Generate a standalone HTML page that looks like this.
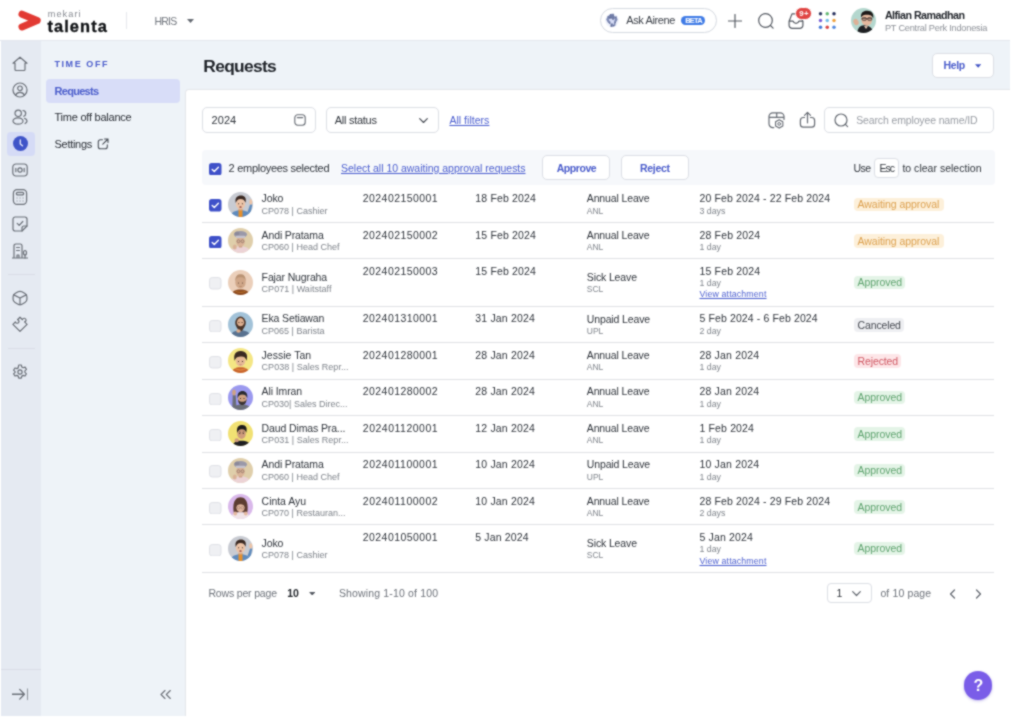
<!DOCTYPE html>
<html><head><meta charset="utf-8"><title>Requests</title>
<style>
*{box-sizing:border-box;margin:0;padding:0}
html,body{width:1024px;height:718px;overflow:hidden;background:#fff;will-change:transform;font-family:"Liberation Sans",sans-serif;color:#2b2f36}
.abs,.t,.av,svg.i{position:absolute}
.t{white-space:nowrap;line-height:14px;font-size:11px}
#rail{left:1px;top:41px;width:40px;height:675px;background:#e5eaf2}
#side{left:41px;top:41px;width:144px;height:675px;background:#eef3f8}
#band{left:185px;top:41px;width:825px;height:50px;background:#eef3f8}
#card{left:185px;top:89px;width:825px;height:627px;background:#fff;border-top-left-radius:4px;border-left:1px solid #e4e6ea;border-top:1px solid #e4e6ea}
#hdrline{left:0;top:40px;width:1010px;height:1px;background:#e3e7ee}
.box{border:1px solid #dcdfe5;border-radius:5px;background:#fff}
.sep{height:1px;background:#dfe1e4;left:202px;width:792px}
a.l{color:#4a5dcf;text-decoration:underline}
body{filter:url(#soft)}
</style></head><body>
<svg width="0" height="0" style="position:absolute"><filter id="soft" x="0" y="0" width="100%" height="100%" color-interpolation-filters="sRGB"><feConvolveMatrix order="3" kernelMatrix="1 2 1 2 8 2 1 2 1" divisor="20" edgeMode="duplicate" preserveAlpha="true"/></filter></svg>

<div class="abs" id="rail"></div><div class="abs" id="side"></div><div class="abs" id="band"></div><div class="abs" id="card"></div><div class="abs" id="hdrline"></div>
<svg class="i" style="left:14px;top:6px" width="32" height="30" viewBox="14 6 32 30"><path d="M22 14.200L37.200 20.550 22 26.900" fill="none" stroke="#e23a33" stroke-width="7" stroke-linecap="round" stroke-linejoin="round"/></svg>
<div class="t" style="left:47.7px;top:8.3px;font-size:9.2px;color:#868a91;line-height:12px;letter-spacing:1.066px;">mekari</div>
<div class="t" style="left:47.4px;top:16.3px;font-size:16.4px;color:#111316;line-height:20px;font-weight:700;letter-spacing:1.107px;-webkit-text-stroke:.35px #111316;">talenta</div>
<div class="abs" style="left:125.500px;top:12px;width:1px;height:17px;background:#e6e8ec"></div>
<div class="t" style="left:154.5px;top:13.5px;font-size:10.5px;color:#70757d;line-height:14px;letter-spacing:-0.772px;">HRIS</div>
<svg class="i" style="left:186.500px;top:18.500px" width="7" height="4" viewBox="0 0 7 4"><path d="M0 0h7L3.500 4z" fill="#666b73"/></svg>
<div class="abs" style="left:600px;top:8px;width:116.500px;height:24.500px;border:1px solid #d6dae1;border-radius:13px;background:#fff"></div>
<svg class="i" style="left:605px;top:13px" width="14" height="15" viewBox="0 0 14 15"><circle cx="7" cy="7.400" r="6.800" fill="#eef1fb"/><path d="M5.500 1L8.300 .8 9.300 3.200 11.500 3.600 12.600 6.800 10.800 9.600 10.200 13 8.200 13.400 6 14 4.800 11 2.800 9.400 1.200 6.600 2.600 3.600z" fill="#7e8ab4"/><path d="M6.300 5.200L8 7l2-1.800L9.300 9 8.600 12 7 10.200 5.600 12.400 5 8.600 3.600 6.400z" fill="#d5dbf5"/><path d="M5.500 1L6.300 5.200M8.300 .8L8 7M11.500 3.600L10 5.200M2.600 3.600L6.300 5.200M10.800 9.600L9.300 9M4.800 11L5 8.600M7 10.200L6 14M8.600 12L8.200 13.400" stroke="#55608a" stroke-width=".7" fill="none"/></svg>
<div class="t" style="left:626.3px;top:13.399999999999999px;font-size:11px;color:#3a3f47;line-height:14px;letter-spacing:-0.388px;">Ask Airene</div>
<div class="abs" style="left:681.400px;top:15.600px;width:23.800px;height:9.800px;border-radius:5px;background:#3f7be6"></div>
<div class="t" style="left:685.2px;top:15.600000000000001px;font-size:7.5px;color:#ffffff;line-height:10px;font-weight:700;letter-spacing:-0.815px;">BETA</div>
<svg class="i" style="left:727.500px;top:13.500px" width="14" height="14" viewBox="0 0 14 14"><path d="M7 .5v13M.5 7h13" stroke="#565b63" stroke-width="1.200" stroke-linecap="round"/></svg>
<svg class="i" style="left:756.500px;top:11.700px" width="18" height="18" viewBox="0 0 18 18"><circle cx="8.500" cy="8.500" r="6.800" fill="none" stroke="#565b63" stroke-width="1.200"/><path d="M13.500 13.500l2.600 2.600" stroke="#565b63" stroke-width="1.200" stroke-linecap="round"/></svg>
<svg class="i" style="left:788.300px;top:12.600px" width="16" height="16" viewBox="0 0 16 16"><path d="M4 .9h4M1.100 8.200L4 .9M14.900 8.200l-1.200-2.600M1.100 8.200v4a3.200 3.200 0 0 0 3.200 3.200h7.400a3.200 3.200 0 0 0 3.200-3.200v-4h-4a3 3 0 0 1-5.800 0z" fill="none" stroke="#565b63" stroke-width="1.200" stroke-linejoin="round" stroke-linecap="round"/></svg>
<div class="abs" style="left:795.200px;top:7.300px;width:17.200px;height:12.800px;border-radius:6.400px;background:#e04644;border:1px solid #fff"></div>
<div class="t" style="left:799.2px;top:8.7px;font-size:7.8px;color:#ffffff;line-height:10px;font-weight:700;letter-spacing:0.353px;">9+</div>
<svg class="i" style="left:815px;top:8px" width="24" height="24" viewBox="0 0 24 24"><circle cx="5.50" cy="5.80" r="1.750" fill="#2f3c63"/><circle cx="12.25" cy="5.80" r="1.750" fill="#62b873"/><circle cx="19.00" cy="5.80" r="1.750" fill="#262f5c"/><circle cx="5.50" cy="12.50" r="1.750" fill="#7a5fd8"/><circle cx="12.25" cy="12.50" r="1.750" fill="#74bfea"/><circle cx="19.00" cy="12.50" r="1.750" fill="#f0a23e"/><circle cx="5.50" cy="19.20" r="1.750" fill="#477ad8"/><circle cx="12.25" cy="19.20" r="1.750" fill="#d84545"/><circle cx="19.00" cy="19.20" r="1.750" fill="#548ade"/></svg>
<div class="av" style="left:851px;top:8.200px;width:25px;height:25px;border-radius:50%;overflow:hidden"><svg width="25" height="25" viewBox="0 0 50 50" style="display:block"><rect width="50" height="50" fill="#b4d7ce"/><path d="M12 52C13 40 18 33.500 28 34.500S44 41 44 52z" fill="#1f2023"/><path d="M26 36l4 6 4-5.500z" fill="#e9c7b3"/><ellipse cx="31.500" cy="23" rx="10.800" ry="12.500" fill="#e3b79d"/><path d="M20 19C19 9 25 5 33 5.500S46 10 44.500 21C42 15 39 13.500 32.500 13.500S23 14.500 20 19z" fill="#1e1a19"/><path d="M21 21.500h21" stroke="#3a2f2c" stroke-width="1.800"/><rect x="22.500" y="19" width="8" height="6" rx="2" fill="none" stroke="#3a2f2c" stroke-width="1.300"/><rect x="33.500" y="19" width="8" height="6" rx="2" fill="none" stroke="#3a2f2c" stroke-width="1.300"/><ellipse cx="10" cy="28" rx="5" ry="6.500" fill="#ddb096" transform="rotate(-25 10 28)"/><path d="M13 24l7-3" stroke="#c9cfd0" stroke-width="1.500"/></svg></div>
<div class="t" style="left:884.9px;top:8.7px;font-size:10.7px;color:#1f2329;line-height:13px;font-weight:700;letter-spacing:-0.519px;">Alfian Ramadhan</div>
<div class="t" style="left:884.9px;top:21.8px;font-size:9.2px;color:#8d9198;line-height:12px;letter-spacing:-0.213px;">PT Central Perk Indonesia</div>
<svg class="i" style="left:12.2px;top:56.0px" width="16" height="16" viewBox="0 0 16 16" fill="none" stroke="#6b7078" stroke-width="1.2" stroke-linecap="round" stroke-linejoin="round"><path d="M8 1.200L1 7.200h2v6.300a1 1 0 0 0 1 1h8a1 1 0 0 0 1-1V7.200h2z"/></svg>
<svg class="i" style="left:12.2px;top:82.3px" width="16" height="16" viewBox="0 0 16 16" fill="none" stroke="#6b7078" stroke-width="1.2" stroke-linecap="round" stroke-linejoin="round"><circle cx="8" cy="8" r="7"/><circle cx="8" cy="6.300" r="2.300"/><path d="M3.600 13.200c.8-2 2.500-2.900 4.400-2.900s3.600.9 4.400 2.900"/></svg>
<svg class="i" style="left:12.2px;top:109.4px" width="16" height="16" viewBox="0 0 16 16" fill="none" stroke="#6b7078" stroke-width="1.2" stroke-linecap="round" stroke-linejoin="round"><circle cx="6.200" cy="4.300" r="3.200"/><ellipse cx="6" cy="12" rx="5" ry="3.200"/><path d="M11 1.500c1.600.2 2.700 1.400 2.700 2.900 0 1.300-.8 2.400-2 2.800M12.600 9.400c1.500.5 2.400 1.400 2.400 2.600 0 1-.7 1.900-1.900 2.500"/></svg>
<div class="abs" style="left:6.500px;top:132.300px;width:28px;height:23.400px;border-radius:4px;background:#d5dbf6"></div>
<svg class="i" style="left:13px;top:136.300px" width="15" height="15" viewBox="0 0 15 15"><circle cx="7.500" cy="7.500" r="7.500" fill="#3f54c8"/><path d="M7.300 4v4l2.200 1.800" fill="none" stroke="#e9ecfb" stroke-width="1.300" stroke-linecap="round" stroke-linejoin="round"/></svg>
<svg class="i" style="left:12.2px;top:162.3px" width="16" height="16" viewBox="0 0 16 16" fill="none" stroke="#6b7078" stroke-width="1.2" stroke-linecap="round" stroke-linejoin="round"><rect x=".8" y="2" width="14.400" height="12" rx="3.200"/><circle cx="8" cy="8" r="2.100"/><path d="M3.800 6.300v3.400M12.200 6.300v3.400"/></svg>
<svg class="i" style="left:12.099999999999998px;top:188.8px" width="16" height="16" viewBox="0 0 16 16" fill="none" stroke="#6b7078" stroke-width="1.2" stroke-linecap="round" stroke-linejoin="round"><rect x="1.400" y=".6" width="13.200" height="14.800" rx="3.600"/><rect x="4.300" y="3.300" width="7.400" height="2.600" rx="1.300"/><path d="M5 9h.1M8 9h.1M11 9h.1M5 12h.1M8 12h.1M11 12h.1" stroke-width="1"/></svg>
<svg class="i" style="left:12.2px;top:215.6px" width="16" height="16" viewBox="0 0 16 16" fill="none" stroke="#6b7078" stroke-width="1.2" stroke-linecap="round" stroke-linejoin="round"><path d="M3.200 1h9.600a2.200 2.200 0 0 1 2.200 2.200V10L10 15H3.200A2.200 2.200 0 0 1 1 12.800V3.200A2.200 2.200 0 0 1 3.200 1z"/><path d="M15 10h-3a2 2 0 0 0-2 2v3"/><path d="M5.200 7.300l2 2 3.600-3.800"/></svg>
<svg class="i" style="left:12.3px;top:242.7px" width="16" height="16" viewBox="0 0 16 16" fill="none" stroke="#6b7078" stroke-width="1.2" stroke-linecap="round" stroke-linejoin="round"><path d="M2 15V2.800A1.800 1.800 0 0 1 3.800 1h4.400A1.800 1.800 0 0 1 10 2.800V15M.3 15h15.400M4.500 4.500h3M4.500 7.500h3M5 15v-3h2v3"/><ellipse cx="13" cy="9.800" rx="1.500" ry="2.300"/><path d="M13 12.100V15"/></svg>
<div class="abs" style="left:7.500px;top:273.500px;width:27.500px;height:1px;background:#d9dde6"></div>
<svg class="i" style="left:12.099999999999998px;top:289.5px" width="16" height="16" viewBox="0 0 16 16" fill="none" stroke="#6b7078" stroke-width="1.2" stroke-linecap="round" stroke-linejoin="round"><path d="M6.06 1.84Q8.00 0.80 9.94 1.84L12.96 3.46Q14.90 4.50 14.90 6.70L14.90 9.30Q14.90 11.50 12.96 12.54L9.94 14.16Q8.00 15.20 6.06 14.16L3.04 12.54Q1.10 11.50 1.10 9.30L1.10 6.70Q1.10 4.50 3.04 3.46z"/><path d="M1.800 4.900L8 8l6.200-3.100M8 8v6.600"/></svg>
<svg class="i" style="left:12.2px;top:315.9px" width="16" height="16" viewBox="0 0 16 16" fill="none" stroke="#6b7078" stroke-width="1.2" stroke-linecap="round" stroke-linejoin="round"><g transform="translate(8 8.300) rotate(45)"><path d="M-5-5H-1.500a1.800 1.800 0 1 1 3 0H5V5H-5V1.500a1.800 1.800 0 1 0 0-3z"/></g></svg>
<div class="abs" style="left:7.500px;top:348.300px;width:27.500px;height:1px;background:#d9dde6"></div>
<svg class="i" style="left:12.2px;top:363.8px" width="16" height="16" viewBox="0 0 16 16" fill="none" stroke="#6b7078" stroke-width="1.2" stroke-linecap="round" stroke-linejoin="round"><circle cx="8" cy="8" r="2.100"/><path d="M6.700 1h2.600l.5 2 1.300.7 2-.6 1.300 2.200-1.500 1.500v1.500l1.500 1.500-1.300 2.200-2-.6-1.300.7-.5 2H6.700l-.5-2-1.300-.7-2 .6-1.300-2.200 1.500-1.500V7.700L1.600 6.200l1.300-2.200 2 .6 1.300-.7z"/></svg>
<div class="abs" style="left:1px;top:669px;width:40px;height:1px;background:#d9dde6"></div>
<svg class="i" style="left:11.95px;top:685.75px" width="16.5" height="16.5" viewBox="0 0 16 16" fill="none" stroke="#6b7078" stroke-width="1.3" stroke-linecap="round" stroke-linejoin="round"><path d="M0 8h11.500M7.500 3.300L12 8l-4.500 4.700M15.500 2.800v10.400"/></svg>
<svg class="i" style="left:159.500px;top:689.500px" width="11" height="9" viewBox="0 0 11 9" fill="none" stroke="#6b7078" stroke-width="1.100" stroke-linecap="round" stroke-linejoin="round"><path d="M5 .5L1 4.500l4 4M10.300 .5l-4 4 4 4"/></svg>
<div class="t" style="left:54.5px;top:57.8px;font-size:9px;color:#4a5ccb;line-height:12px;font-weight:700;letter-spacing:1.563px;">TIME OFF</div>
<div class="abs" style="left:46px;top:78.800px;width:134px;height:24px;border-radius:4px;background:#d8ddf8"></div>
<div class="t" style="left:54.5px;top:83.7px;font-size:11px;color:#4a5ccb;line-height:14px;font-weight:700;letter-spacing:-0.714px;">Requests</div>
<div class="t" style="left:54.5px;top:110.2px;font-size:11px;color:#2b2f36;line-height:14px;letter-spacing:-0.238px;">Time off balance</div>
<div class="t" style="left:54.5px;top:137.0px;font-size:11px;color:#2b2f36;line-height:14px;letter-spacing:-0.281px;">Settings</div>
<svg class="i" style="left:96.500px;top:138.300px" width="12" height="12" viewBox="0 0 12 12" fill="none" stroke="#4b5058" stroke-width="1.100" stroke-linecap="round" stroke-linejoin="round"><path d="M5.500 1.800H3.300A2 2 0 0 0 1.300 3.800v5a2 2 0 0 0 2 2h5a2 2 0 0 0 2-2V6.700M7.500 1h3.500v3.500M11 1L5.800 6.200"/></svg>
<div class="t" style="left:203.3px;top:55.2px;font-size:17.4px;color:#1f2329;line-height:22px;font-weight:700;letter-spacing:-0.69px;">Requests</div>
<div class="abs box" style="left:931.500px;top:52.500px;width:62px;height:25.800px"></div>
<div class="t" style="left:943.5px;top:58.400000000000006px;font-size:10.5px;color:#4a5ccb;line-height:14px;font-weight:700;letter-spacing:-0.363px;">Help</div>
<svg class="i" style="left:975px;top:63.600px" width="6.400" height="4" viewBox="0 0 7 4"><path d="M0 0h7L3.500 4z" fill="#4254c5"/></svg>
<div class="abs box" style="left:202px;top:107px;width:113.500px;height:26px"></div>
<div class="t" style="left:211.6px;top:113.2px;font-size:11px;color:#30353c;line-height:14px;letter-spacing:0.033px;">2024</div>
<svg class="i" style="left:293.500px;top:114px" width="12" height="12" viewBox="0 0 12 12" fill="none" stroke="#666b73" stroke-width="1.100" stroke-linecap="round"><rect x=".8" y=".8" width="10.400" height="10.400" rx="3"/><path d="M3.300 3.600h5.400"/></svg>
<div class="abs box" style="left:325.500px;top:107px;width:113px;height:26px"></div>
<div class="t" style="left:334.7px;top:113.2px;font-size:11px;color:#30353c;line-height:14px;letter-spacing:-0.263px;">All status</div>
<svg class="i" style="left:418.500px;top:117.500px" width="9" height="5.500" viewBox="0 0 9 5.500" fill="none" stroke="#4b5058" stroke-width="1.200" stroke-linecap="round" stroke-linejoin="round"><path d="M.7 .7l3.800 3.800L8.300 .7"/></svg>
<div class="t" style="left:449.4px;top:113.2px;font-size:10.5px;color:#4a5ccb;line-height:14px;letter-spacing:0.03px;"><a class="l">All filters</a></div>
<svg class="i" style="left:767.500px;top:111.500px" width="17" height="17" viewBox="0 0 17 17" fill="none" stroke="#666b73" stroke-width="1.200" stroke-linecap="round" stroke-linejoin="round"><path d="M5.800 15.600H4.800A3.800 3.800 0 0 1 1 11.800V4.600A3.800 3.800 0 0 1 4.800 .8h7.400A3.800 3.800 0 0 1 16 4.600V7.500M1.200 5.300h14.700M8.700 .9v4.300"/><polygon points="14.84,14.00 11.20,16.10 7.56,14.00 7.56,9.80 11.20,7.70 14.84,9.80" stroke-width="1.100"/><circle cx="11.200" cy="11.900" r="1.400" stroke-width="1"/></svg>
<svg class="i" style="left:798.500px;top:111px" width="17" height="17" viewBox="0 0 17 17" fill="none" stroke="#666b73" stroke-width="1.200" stroke-linecap="round" stroke-linejoin="round"><path d="M5.600 6.500H4.300A2.900 2.900 0 0 0 1.400 9.400v3.900A2.900 2.900 0 0 0 4.300 16.200h8.400a2.900 2.900 0 0 0 2.900-2.900V9.400a2.900 2.900 0 0 0-2.900-2.900H11.400M8.500 11.800V1.500M5.500 4.400L8.500 1.400l3 3"/></svg>
<div class="abs box" style="left:824.300px;top:107px;width:170px;height:26px"></div>
<svg class="i" style="left:833.500px;top:113px" width="15" height="15" viewBox="0 0 15 15" fill="none" stroke="#666b73" stroke-width="1.200" stroke-linecap="round"><circle cx="7" cy="7" r="6"/><path d="M11.400 11.400l2.200 2.200"/></svg>
<div class="t" style="left:856.2px;top:113.2px;font-size:10.5px;color:#999da4;line-height:14px;letter-spacing:-0.135px;">Search employee name/ID</div>
<div class="abs" style="left:202px;top:150px;width:792.500px;height:35px;border-radius:4px;background:#f6f8fb"></div>
<div class="abs" style="left:209px;top:161.35px;width:12.500px;height:12.500px"><svg width="12.500" height="12.500" viewBox="0 0 12.500 12.500"><rect width="12.500" height="12.500" rx="2.800" fill="#3f51c9"/><path d="M3.200 6.500l2.100 2.100 4.100-4.300" fill="none" stroke="#fff" stroke-width="1.400" stroke-linecap="round" stroke-linejoin="round"/></svg></div>
<div class="t" style="left:228.6px;top:161.0px;font-size:11px;color:#30353c;line-height:14px;letter-spacing:-0.289px;">2 employees selected</div>
<div class="t" style="left:341px;top:161.0px;font-size:10.5px;color:#4a5ccb;line-height:14px;letter-spacing:-0.013px;"><a class="l">Select all 10 awaiting approval requests</a></div>
<div class="abs box" style="left:542.300px;top:154.600px;width:67.700px;height:25.600px"></div>
<div class="t" style="left:556.7px;top:160.6px;font-size:10.5px;color:#4a5ccb;line-height:14px;font-weight:700;letter-spacing:-0.441px;">Approve</div>
<div class="abs box" style="left:621px;top:154.600px;width:67.500px;height:25.600px"></div>
<div class="t" style="left:640px;top:160.6px;font-size:10.5px;color:#4a5ccb;line-height:14px;font-weight:700;letter-spacing:-0.286px;">Reject</div>
<div class="t" style="left:853.4px;top:161.0px;font-size:10.5px;color:#30353c;line-height:14px;letter-spacing:-0.491px;">Use</div>
<div class="abs box" style="left:874.300px;top:158px;width:24.500px;height:19.500px;border-radius:4px"></div>
<div class="t" style="left:879.5px;top:161.0px;font-size:10.5px;color:#30353c;line-height:14px;letter-spacing:-1.001px;">Esc</div>
<div class="t" style="left:902.4px;top:161.0px;font-size:10.5px;color:#30353c;line-height:14px;letter-spacing:0.017px;">to clear selection</div>
<div class="abs" style="left:209px;top:197.85px;width:12.500px;height:12.500px"><svg width="12.500" height="12.500" viewBox="0 0 12.500 12.500"><rect width="12.500" height="12.500" rx="2.800" fill="#3f51c9"/><path d="M3.200 6.500l2.100 2.100 4.100-4.300" fill="none" stroke="#fff" stroke-width="1.400" stroke-linecap="round" stroke-linejoin="round"/></svg></div>
<div class="av" style="left:228px;top:191.6px;width:25px;height:25px;border-radius:50%;overflow:hidden"><svg width="25" height="25" viewBox="0 0 50 50" style="display:block"><rect width="50" height="50" fill="#c8cbd2"/><path d="M39 40L44.500 24l4 1.500L45 44z" fill="#5f8bbd"/><ellipse cx="45.500" cy="20" rx="3.200" ry="5.500" fill="#ecc3a6"/><path d="M5 52C5 41 13 36.500 25 36.500S45 41 45 52z" fill="#5f8bbd"/><rect x="21" y="35" width="8" height="17" fill="#e58f2c"/><rect x="21.500" y="30" width="7" height="7" fill="#d7a582"/><ellipse cx="25" cy="23.500" rx="9.300" ry="10.800" fill="#ecc3a6"/><path d="M15.500 22C13 11 19 7 26 7s11.500 4.500 9 14.500C33 16 30 14 25 14s-7.500 2.500-9.500 8z" fill="#3b2a23"/><circle cx="21.2" cy="23.5" r="1.2" fill="#2a1f1b"/><circle cx="28.8" cy="23.5" r="1.2" fill="#2a1f1b"/><ellipse cx="25" cy="30" rx="2.300" ry="1.700" fill="#8a3d34"/></svg></div>
<div class="t" style="left:261.6px;top:191.1px;font-size:10.5px;color:#30353c;line-height:14px;letter-spacing:-0.139px;">Joko</div>
<div class="t" style="left:261.6px;top:204.6px;font-size:9px;color:#7f848b;line-height:12px;letter-spacing:0.0px;">CP078 | Cashier</div>
<div class="t" style="left:362.8px;top:191.1px;font-size:10.5px;color:#30353c;line-height:14px;letter-spacing:0.436px;">202402150001</div>
<div class="t" style="left:475.3px;top:191.1px;font-size:10.5px;color:#30353c;line-height:14px;letter-spacing:0.169px;">18 Feb 2024</div>
<div class="t" style="left:586.8px;top:191.2px;font-size:10.5px;color:#30353c;line-height:14px;letter-spacing:-0.134px;">Annual Leave</div>
<div class="t" style="left:586.8px;top:204.5px;font-size:8.5px;color:#7f848b;line-height:12px;letter-spacing:0.0px;">ANL</div>
<div class="t" style="left:699.5px;top:191.1px;font-size:10.5px;color:#30353c;line-height:14px;letter-spacing:0.139px;">20 Feb 2024 - 22 Feb 2024</div>
<div class="t" style="left:699.5px;top:204.5px;font-size:8.8px;color:#7f848b;line-height:12px;letter-spacing:-0.0px;">3 days</div>
<div class="abs" style="left:853.600px;top:197.5px;width:90.0px;height:13.800px;border-radius:4px;background:#fdf0da"></div>
<div class="t" style="left:857.6px;top:197.20000000000002px;font-size:10.5px;color:#dca04e;line-height:14px;letter-spacing:-0.064px;">Awaiting approval</div>
<div class="abs sep" style="top:221.9px"></div>
<div class="abs" style="left:209px;top:234.25px;width:12.500px;height:12.500px"><svg width="12.500" height="12.500" viewBox="0 0 12.500 12.500"><rect width="12.500" height="12.500" rx="2.800" fill="#3f51c9"/><path d="M3.200 6.500l2.100 2.100 4.100-4.300" fill="none" stroke="#fff" stroke-width="1.400" stroke-linecap="round" stroke-linejoin="round"/></svg></div>
<div class="av" style="left:228px;top:228.0px;width:25px;height:25px;border-radius:50%;overflow:hidden"><svg width="25" height="25" viewBox="0 0 50 50" style="display:block"><rect width="50" height="50" fill="#dfceaa"/><path d="M5 52C5 41 13 36.500 25 36.500S45 41 45 52z" fill="#ecd3d6"/><rect x="21.500" y="32" width="7" height="7" fill="#caa085"/><ellipse cx="25" cy="27" rx="8.600" ry="10" fill="#d9b297"/><ellipse cx="25" cy="13" rx="13" ry="6.800" fill="#9a98a8"/><ellipse cx="18" cy="11" rx="5" ry="4" fill="#8b8999"/><rect x="15.500" y="15.500" width="19" height="4.600" rx="2" fill="#c6c4ce"/><circle cx="21" cy="26.500" r="2.900" fill="none" stroke="#6a5850" stroke-width="1"/><circle cx="29" cy="26.500" r="2.900" fill="none" stroke="#6a5850" stroke-width="1"/><ellipse cx="13.500" cy="38" rx="4" ry="5" fill="#d9b297"/></svg></div>
<div class="t" style="left:261.6px;top:227.5px;font-size:10.5px;color:#30353c;line-height:14px;letter-spacing:-0.133px;">Andi Pratama</div>
<div class="t" style="left:261.6px;top:241.0px;font-size:9px;color:#7f848b;line-height:12px;letter-spacing:0.0px;">CP060 | Head Chef</div>
<div class="t" style="left:362.8px;top:227.5px;font-size:10.5px;color:#30353c;line-height:14px;letter-spacing:0.436px;">202402150002</div>
<div class="t" style="left:475.3px;top:227.5px;font-size:10.5px;color:#30353c;line-height:14px;letter-spacing:0.169px;">15 Feb 2024</div>
<div class="t" style="left:586.8px;top:227.6px;font-size:10.5px;color:#30353c;line-height:14px;letter-spacing:-0.134px;">Annual Leave</div>
<div class="t" style="left:586.8px;top:240.9px;font-size:8.5px;color:#7f848b;line-height:12px;letter-spacing:0.0px;">ANL</div>
<div class="t" style="left:699.5px;top:227.5px;font-size:10.5px;color:#30353c;line-height:14px;letter-spacing:0.169px;">28 Feb 2024</div>
<div class="t" style="left:699.5px;top:240.9px;font-size:8.8px;color:#7f848b;line-height:12px;letter-spacing:-0.0px;">1 day</div>
<div class="abs" style="left:853.600px;top:233.9px;width:90.0px;height:13.800px;border-radius:4px;background:#fdf0da"></div>
<div class="t" style="left:857.6px;top:233.60000000000002px;font-size:10.5px;color:#dca04e;line-height:14px;letter-spacing:-0.064px;">Awaiting approval</div>
<div class="abs sep" style="top:258.2px"></div>
<div class="abs" style="left:209px;top:275.95px;width:12.500px;height:12.500px"><svg width="12.500" height="12.500" viewBox="0 0 12.500 12.500"><rect x=".5" y=".5" width="11.500" height="11.500" rx="2.800" fill="#eff0f3" stroke="#dfe1e6"/></svg></div>
<div class="av" style="left:228px;top:269.7px;width:25px;height:25px;border-radius:50%;overflow:hidden"><svg width="25" height="25" viewBox="0 0 50 50" style="display:block"><rect width="50" height="50" fill="#ebcfba"/><path d="M7 52C7 43 14 39 25 39s18 4 18 13z" fill="#8c4a20"/><path d="M15 42.500c6 3 14 3 20 0" stroke="#c9802f" stroke-width="1.500" fill="none"/><ellipse cx="25" cy="25" rx="10.300" ry="12" fill="#cfa688"/><path d="M14.800 24C13.500 12 19 8.500 25 8.500S36.500 12 35.200 24C34 17 31 14.500 25 14.500S16 17 14.800 24z" fill="#b99273"/><circle cx="21" cy="26" r="1.1" fill="#5a4032"/><circle cx="29" cy="26" r="1.1" fill="#5a4032"/><path d="M22.500 32.500c1.500 1 3.500 1 5 0" stroke="#9a6a50" stroke-width="1" fill="none"/></svg></div>
<div class="t" style="left:261.6px;top:269.59999999999997px;font-size:10.5px;color:#30353c;line-height:14px;letter-spacing:-0.129px;">Fajar Nugraha</div>
<div class="t" style="left:261.6px;top:283.09999999999997px;font-size:9px;color:#7f848b;line-height:12px;letter-spacing:0.029px;">CP071 | Waitstaff</div>
<div class="t" style="left:362.8px;top:263.8px;font-size:10.5px;color:#30353c;line-height:14px;letter-spacing:0.436px;">202402150003</div>
<div class="t" style="left:475.3px;top:263.8px;font-size:10.5px;color:#30353c;line-height:14px;letter-spacing:0.169px;">15 Feb 2024</div>
<div class="t" style="left:586.8px;top:269.7px;font-size:10.5px;color:#30353c;line-height:14px;letter-spacing:-0.128px;">Sick Leave</div>
<div class="t" style="left:586.8px;top:282.99999999999994px;font-size:8.5px;color:#7f848b;line-height:12px;letter-spacing:0.0px;">SCL</div>
<div class="t" style="left:699.5px;top:263.8px;font-size:10.5px;color:#30353c;line-height:14px;letter-spacing:0.169px;">15 Feb 2024</div>
<div class="t" style="left:699.5px;top:277.2px;font-size:8.8px;color:#7f848b;line-height:12px;letter-spacing:-0.0px;">1 day</div>
<div class="t" style="left:699.5px;top:288.4px;font-size:8.8px;color:#4a5ccb;line-height:12px;letter-spacing:0.141px;"><a class="l">View attachment</a></div>
<div class="abs" style="left:853.600px;top:275.5px;width:51.2px;height:13.800px;border-radius:4px;background:#e4f4e7"></div>
<div class="t" style="left:857.6px;top:275.2px;font-size:10.5px;color:#5fa36f;line-height:14px;letter-spacing:-0.081px;">Approved</div>
<div class="abs sep" style="top:305.8px"></div>
<div class="abs" style="left:209px;top:318.15000000000003px;width:12.500px;height:12.500px"><svg width="12.500" height="12.500" viewBox="0 0 12.500 12.500"><rect x=".5" y=".5" width="11.500" height="11.500" rx="2.800" fill="#eff0f3" stroke="#dfe1e6"/></svg></div>
<div class="av" style="left:228px;top:311.9px;width:25px;height:25px;border-radius:50%;overflow:hidden"><svg width="25" height="25" viewBox="0 0 50 50" style="display:block"><rect width="50" height="50" fill="#a2c2d8"/><path d="M5 52C5 41 13 36.500 25 36.500S45 41 45 52z" fill="#58718f"/><ellipse cx="25" cy="22" rx="10.500" ry="13" fill="#4b3529"/><ellipse cx="25" cy="21.500" rx="7.300" ry="9.500" fill="#dcae8e"/><path d="M17.500 22c0 12 4 16.500 7.500 16.500S32.500 34 32.500 22c-1.500 5-4 6.500-7.500 6.500S19 27 17.500 22z" fill="#4b3529"/><circle cx="21.8" cy="21" r="1.2" fill="#2a1f1b"/><circle cx="28.2" cy="21" r="1.2" fill="#2a1f1b"/><ellipse cx="21" cy="38" rx="4.500" ry="3.500" fill="#dcae8e"/></svg></div>
<div class="t" style="left:261.6px;top:311.40000000000003px;font-size:10.5px;color:#30353c;line-height:14px;letter-spacing:-0.134px;">Eka Setiawan</div>
<div class="t" style="left:261.6px;top:324.90000000000003px;font-size:9px;color:#7f848b;line-height:12px;letter-spacing:0.0px;">CP065 | Barista</div>
<div class="t" style="left:362.8px;top:311.40000000000003px;font-size:10.5px;color:#30353c;line-height:14px;letter-spacing:0.436px;">202401310001</div>
<div class="t" style="left:475.3px;top:311.40000000000003px;font-size:10.5px;color:#30353c;line-height:14px;letter-spacing:0.171px;">31 Jan 2024</div>
<div class="t" style="left:586.8px;top:311.50000000000006px;font-size:10.5px;color:#30353c;line-height:14px;letter-spacing:-0.135px;">Unpaid Leave</div>
<div class="t" style="left:586.8px;top:324.8px;font-size:8.5px;color:#7f848b;line-height:12px;letter-spacing:0.0px;">UPL</div>
<div class="t" style="left:699.5px;top:311.40000000000003px;font-size:10.5px;color:#30353c;line-height:14px;letter-spacing:0.116px;">5 Feb 2024 - 6 Feb 2024</div>
<div class="t" style="left:699.5px;top:324.8px;font-size:8.8px;color:#7f848b;line-height:12px;letter-spacing:-0.0px;">2 day</div>
<div class="abs" style="left:853.600px;top:317.8px;width:50.2px;height:13.800px;border-radius:4px;background:#eeeff2"></div>
<div class="t" style="left:857.6px;top:317.5px;font-size:10.5px;color:#454950;line-height:14px;letter-spacing:-0.145px;">Canceled</div>
<div class="abs sep" style="top:342.3px"></div>
<div class="abs" style="left:209px;top:354.65000000000003px;width:12.500px;height:12.500px"><svg width="12.500" height="12.500" viewBox="0 0 12.500 12.500"><rect x=".5" y=".5" width="11.500" height="11.500" rx="2.800" fill="#eff0f3" stroke="#dfe1e6"/></svg></div>
<div class="av" style="left:228px;top:348.4px;width:25px;height:25px;border-radius:50%;overflow:hidden"><svg width="25" height="25" viewBox="0 0 50 50" style="display:block"><rect width="50" height="50" fill="#f4e684"/><path d="M7 52C7 43 14 38.500 25 38.500S43 43 43 52z" fill="#c9632d"/><path d="M14 41c6 4 16 4 22 0" stroke="#e39a4a" stroke-width="2" fill="none"/><ellipse cx="25" cy="26" rx="9.600" ry="10.500" fill="#e6b996"/><path d="M13.500 26C9.500 12 17 5 26 6s15 6 11 19.500C35.500 19 31.500 16 24.500 17S15 20 13.500 26z" fill="#3a2a21"/><circle cx="21" cy="27" r="1.2" fill="#2a1f1b"/><circle cx="29" cy="27" r="1.2" fill="#2a1f1b"/><path d="M23 33c1.300.8 2.700.8 4 0" stroke="#a35a48" stroke-width="1" fill="none"/></svg></div>
<div class="t" style="left:261.6px;top:347.90000000000003px;font-size:10.5px;color:#30353c;line-height:14px;letter-spacing:0.008px;">Jessie Tan</div>
<div class="t" style="left:261.6px;top:361.40000000000003px;font-size:9px;color:#7f848b;line-height:12px;letter-spacing:0.024px;">CP038 | Sales Repr...</div>
<div class="t" style="left:362.8px;top:347.90000000000003px;font-size:10.5px;color:#30353c;line-height:14px;letter-spacing:0.436px;">202401280001</div>
<div class="t" style="left:475.3px;top:347.90000000000003px;font-size:10.5px;color:#30353c;line-height:14px;letter-spacing:0.171px;">28 Jan 2024</div>
<div class="t" style="left:586.8px;top:348.00000000000006px;font-size:10.5px;color:#30353c;line-height:14px;letter-spacing:-0.134px;">Annual Leave</div>
<div class="t" style="left:586.8px;top:361.3px;font-size:8.5px;color:#7f848b;line-height:12px;letter-spacing:0.0px;">ANL</div>
<div class="t" style="left:699.5px;top:347.90000000000003px;font-size:10.5px;color:#30353c;line-height:14px;letter-spacing:0.171px;">28 Jan 2024</div>
<div class="t" style="left:699.5px;top:361.3px;font-size:8.8px;color:#7f848b;line-height:12px;letter-spacing:-0.0px;">1 day</div>
<div class="abs" style="left:853.600px;top:354.3px;width:47.6px;height:13.800px;border-radius:4px;background:#fde6e8"></div>
<div class="t" style="left:857.6px;top:354.0px;font-size:10.5px;color:#cf5762;line-height:14px;letter-spacing:-0.13px;">Rejected</div>
<div class="abs sep" style="top:378.7px"></div>
<div class="abs" style="left:209px;top:391.05px;width:12.500px;height:12.500px"><svg width="12.500" height="12.500" viewBox="0 0 12.500 12.500"><rect x=".5" y=".5" width="11.500" height="11.500" rx="2.800" fill="#eff0f3" stroke="#dfe1e6"/></svg></div>
<div class="av" style="left:228px;top:384.8px;width:25px;height:25px;border-radius:50%;overflow:hidden"><svg width="25" height="25" viewBox="0 0 50 50" style="display:block"><rect width="50" height="50" fill="#9b99ef"/><path d="M8.500 46L9.500 20l6 .5L17 46z" fill="#6b6e78"/><ellipse cx="12" cy="15" rx="3.600" ry="5.800" fill="#cfa282"/><path d="M9 52C9 43 16 39 28 39s17 4 17 13z" fill="#6b6e78"/><ellipse cx="28.500" cy="28" rx="8.800" ry="10.300" fill="#cfa282"/><path d="M19.800 28c.5 9 4.500 12 8.700 12s8.200-3 8.700-12c-2 4.500-5 5.500-8.700 5.500S21.800 32.500 19.800 28z" fill="#3a3233"/><path d="M19.500 27C17.500 16 23 12 29 12s11 4 9.500 14.500C36.500 21 34 19 28.500 19S21 21 19.500 27z" fill="#2b2b30"/><circle cx="25" cy="27" r="1.2" fill="#2a1f1b"/><circle cx="32" cy="27" r="1.2" fill="#2a1f1b"/></svg></div>
<div class="t" style="left:261.6px;top:384.3px;font-size:10.5px;color:#30353c;line-height:14px;letter-spacing:-0.115px;">Ali Imran</div>
<div class="t" style="left:261.6px;top:397.8px;font-size:9px;color:#7f848b;line-height:12px;letter-spacing:0.0px;">CP030| Sales Direc...</div>
<div class="t" style="left:362.8px;top:384.3px;font-size:10.5px;color:#30353c;line-height:14px;letter-spacing:0.436px;">202401280002</div>
<div class="t" style="left:475.3px;top:384.3px;font-size:10.5px;color:#30353c;line-height:14px;letter-spacing:0.171px;">28 Jan 2024</div>
<div class="t" style="left:586.8px;top:384.40000000000003px;font-size:10.5px;color:#30353c;line-height:14px;letter-spacing:-0.134px;">Annual Leave</div>
<div class="t" style="left:586.8px;top:397.7px;font-size:8.5px;color:#7f848b;line-height:12px;letter-spacing:0.0px;">ANL</div>
<div class="t" style="left:699.5px;top:384.3px;font-size:10.5px;color:#30353c;line-height:14px;letter-spacing:0.171px;">28 Jan 2024</div>
<div class="t" style="left:699.5px;top:397.7px;font-size:8.8px;color:#7f848b;line-height:12px;letter-spacing:-0.0px;">1 day</div>
<div class="abs" style="left:853.600px;top:390.7px;width:51.2px;height:13.800px;border-radius:4px;background:#e4f4e7"></div>
<div class="t" style="left:857.6px;top:390.4px;font-size:10.5px;color:#5fa36f;line-height:14px;letter-spacing:-0.081px;">Approved</div>
<div class="abs sep" style="top:415.1px"></div>
<div class="abs" style="left:209px;top:427.45000000000005px;width:12.500px;height:12.500px"><svg width="12.500" height="12.500" viewBox="0 0 12.500 12.500"><rect x=".5" y=".5" width="11.500" height="11.500" rx="2.800" fill="#eff0f3" stroke="#dfe1e6"/></svg></div>
<div class="av" style="left:228px;top:421.2px;width:25px;height:25px;border-radius:50%;overflow:hidden"><svg width="25" height="25" viewBox="0 0 50 50" style="display:block"><rect width="50" height="50" fill="#f1e173"/><path d="M9 52C9 43 16 39.500 27 39.500S45 43 45 52z" fill="#1f1f22"/><ellipse cx="27" cy="25" rx="8.700" ry="10.800" fill="#cf9c7c"/><path d="M18.500 24C16 12 22 7.500 29 8s10 5 7.500 15.500C35 18 32 16 27 16.500S20 19 18.500 24z" fill="#1d1b1b"/><circle cx="23.5" cy="25" r="1.2" fill="#2a1f1b"/><circle cx="30.5" cy="25" r="1.2" fill="#2a1f1b"/><path d="M22 21.500l3.500 1M32.500 21.500l-3.500 1" stroke="#1d1b1b" stroke-width="1.100"/><ellipse cx="17.500" cy="38.500" rx="4.500" ry="4" fill="#cf9c7c"/></svg></div>
<div class="t" style="left:261.6px;top:420.70000000000005px;font-size:10.5px;color:#30353c;line-height:14px;letter-spacing:-0.126px;">Daud Dimas Pra...</div>
<div class="t" style="left:261.6px;top:434.20000000000005px;font-size:9px;color:#7f848b;line-height:12px;letter-spacing:0.024px;">CP031 | Sales Repr...</div>
<div class="t" style="left:362.8px;top:420.70000000000005px;font-size:10.5px;color:#30353c;line-height:14px;letter-spacing:0.501px;">202401120001</div>
<div class="t" style="left:475.3px;top:420.70000000000005px;font-size:10.5px;color:#30353c;line-height:14px;letter-spacing:0.171px;">12 Jan 2024</div>
<div class="t" style="left:586.8px;top:420.80000000000007px;font-size:10.5px;color:#30353c;line-height:14px;letter-spacing:-0.134px;">Annual Leave</div>
<div class="t" style="left:586.8px;top:434.1px;font-size:8.5px;color:#7f848b;line-height:12px;letter-spacing:0.0px;">ANL</div>
<div class="t" style="left:699.5px;top:420.70000000000005px;font-size:10.5px;color:#30353c;line-height:14px;letter-spacing:0.145px;">1 Feb 2024</div>
<div class="t" style="left:699.5px;top:434.1px;font-size:8.8px;color:#7f848b;line-height:12px;letter-spacing:-0.0px;">1 day</div>
<div class="abs" style="left:853.600px;top:427.1px;width:51.2px;height:13.800px;border-radius:4px;background:#e4f4e7"></div>
<div class="t" style="left:857.6px;top:426.8px;font-size:10.5px;color:#5fa36f;line-height:14px;letter-spacing:-0.081px;">Approved</div>
<div class="abs sep" style="top:451.5px"></div>
<div class="abs" style="left:209px;top:463.85px;width:12.500px;height:12.500px"><svg width="12.500" height="12.500" viewBox="0 0 12.500 12.500"><rect x=".5" y=".5" width="11.500" height="11.500" rx="2.800" fill="#eff0f3" stroke="#dfe1e6"/></svg></div>
<div class="av" style="left:228px;top:457.6px;width:25px;height:25px;border-radius:50%;overflow:hidden"><svg width="25" height="25" viewBox="0 0 50 50" style="display:block"><rect width="50" height="50" fill="#dfceaa"/><path d="M5 52C5 41 13 36.500 25 36.500S45 41 45 52z" fill="#ecd3d6"/><rect x="21.500" y="32" width="7" height="7" fill="#caa085"/><ellipse cx="25" cy="27" rx="8.600" ry="10" fill="#d9b297"/><ellipse cx="25" cy="13" rx="13" ry="6.800" fill="#9a98a8"/><ellipse cx="18" cy="11" rx="5" ry="4" fill="#8b8999"/><rect x="15.500" y="15.500" width="19" height="4.600" rx="2" fill="#c6c4ce"/><circle cx="21" cy="26.500" r="2.900" fill="none" stroke="#6a5850" stroke-width="1"/><circle cx="29" cy="26.500" r="2.900" fill="none" stroke="#6a5850" stroke-width="1"/><ellipse cx="13.500" cy="38" rx="4" ry="5" fill="#d9b297"/></svg></div>
<div class="t" style="left:261.6px;top:457.1px;font-size:10.5px;color:#30353c;line-height:14px;letter-spacing:-0.133px;">Andi Pratama</div>
<div class="t" style="left:261.6px;top:470.6px;font-size:9px;color:#7f848b;line-height:12px;letter-spacing:0.0px;">CP060 | Head Chef</div>
<div class="t" style="left:362.8px;top:457.1px;font-size:10.5px;color:#30353c;line-height:14px;letter-spacing:0.501px;">202401100001</div>
<div class="t" style="left:475.3px;top:457.1px;font-size:10.5px;color:#30353c;line-height:14px;letter-spacing:0.171px;">10 Jan 2024</div>
<div class="t" style="left:586.8px;top:457.20000000000005px;font-size:10.5px;color:#30353c;line-height:14px;letter-spacing:-0.135px;">Unpaid Leave</div>
<div class="t" style="left:586.8px;top:470.5px;font-size:8.5px;color:#7f848b;line-height:12px;letter-spacing:0.0px;">UPL</div>
<div class="t" style="left:699.5px;top:457.1px;font-size:10.5px;color:#30353c;line-height:14px;letter-spacing:0.171px;">10 Jan 2024</div>
<div class="t" style="left:699.5px;top:470.5px;font-size:8.8px;color:#7f848b;line-height:12px;letter-spacing:-0.0px;">1 day</div>
<div class="abs" style="left:853.600px;top:463.5px;width:51.2px;height:13.800px;border-radius:4px;background:#e4f4e7"></div>
<div class="t" style="left:857.6px;top:463.2px;font-size:10.5px;color:#5fa36f;line-height:14px;letter-spacing:-0.081px;">Approved</div>
<div class="abs sep" style="top:487.9px"></div>
<div class="abs" style="left:209px;top:500.25px;width:12.500px;height:12.500px"><svg width="12.500" height="12.500" viewBox="0 0 12.500 12.500"><rect x=".5" y=".5" width="11.500" height="11.500" rx="2.800" fill="#eff0f3" stroke="#dfe1e6"/></svg></div>
<div class="av" style="left:228px;top:494.0px;width:25px;height:25px;border-radius:50%;overflow:hidden"><svg width="25" height="25" viewBox="0 0 50 50" style="display:block"><rect width="50" height="50" fill="#d9b8ea"/><path d="M11.500 37C8 15 16 6.500 25 6.500S42 15 38.500 37z" fill="#5c3d31"/><path d="M5 52C5 41 13 36.500 25 36.500S45 41 45 52z" fill="#f0e4e8"/><ellipse cx="25" cy="27" rx="8.300" ry="9.300" fill="#e3b9a0"/><path d="M16 26c-.5-8 3-11.500 9-11.500s9.500 3.500 9 11.500c-2-4-4.500-5.500-9-5.500s-7 1.500-9 5.500z" fill="#5c3d31"/><circle cx="21.500" cy="27.500" r="2.700" fill="none" stroke="#7a5a50" stroke-width=".8"/><circle cx="28.500" cy="27.500" r="2.700" fill="none" stroke="#7a5a50" stroke-width=".8"/><ellipse cx="14.500" cy="39" rx="3.800" ry="4" fill="#e3b9a0"/><ellipse cx="35.500" cy="39" rx="3.800" ry="4" fill="#e3b9a0"/></svg></div>
<div class="t" style="left:261.6px;top:493.5px;font-size:10.5px;color:#30353c;line-height:14px;letter-spacing:-0.041px;">Cinta Ayu</div>
<div class="t" style="left:261.6px;top:507.0px;font-size:9px;color:#7f848b;line-height:12px;letter-spacing:0.0px;">CP070 | Restauran...</div>
<div class="t" style="left:362.8px;top:493.5px;font-size:10.5px;color:#30353c;line-height:14px;letter-spacing:0.501px;">202401100002</div>
<div class="t" style="left:475.3px;top:493.5px;font-size:10.5px;color:#30353c;line-height:14px;letter-spacing:0.171px;">10 Jan 2024</div>
<div class="t" style="left:586.8px;top:493.6px;font-size:10.5px;color:#30353c;line-height:14px;letter-spacing:-0.134px;">Annual Leave</div>
<div class="t" style="left:586.8px;top:506.9px;font-size:8.5px;color:#7f848b;line-height:12px;letter-spacing:0.0px;">ANL</div>
<div class="t" style="left:699.5px;top:493.5px;font-size:10.5px;color:#30353c;line-height:14px;letter-spacing:0.139px;">28 Feb 2024 - 29 Feb 2024</div>
<div class="t" style="left:699.5px;top:506.9px;font-size:8.8px;color:#7f848b;line-height:12px;letter-spacing:-0.0px;">2 days</div>
<div class="abs" style="left:853.600px;top:499.9px;width:51.2px;height:13.800px;border-radius:4px;background:#e4f4e7"></div>
<div class="t" style="left:857.6px;top:499.59999999999997px;font-size:10.5px;color:#5fa36f;line-height:14px;letter-spacing:-0.081px;">Approved</div>
<div class="abs sep" style="top:524.3px"></div>
<div class="abs" style="left:209px;top:542.05px;width:12.500px;height:12.500px"><svg width="12.500" height="12.500" viewBox="0 0 12.500 12.500"><rect x=".5" y=".5" width="11.500" height="11.500" rx="2.800" fill="#eff0f3" stroke="#dfe1e6"/></svg></div>
<div class="av" style="left:228px;top:535.8px;width:25px;height:25px;border-radius:50%;overflow:hidden"><svg width="25" height="25" viewBox="0 0 50 50" style="display:block"><rect width="50" height="50" fill="#c8cbd2"/><path d="M39 40L44.500 24l4 1.500L45 44z" fill="#5f8bbd"/><ellipse cx="45.500" cy="20" rx="3.200" ry="5.500" fill="#ecc3a6"/><path d="M5 52C5 41 13 36.500 25 36.500S45 41 45 52z" fill="#5f8bbd"/><rect x="21" y="35" width="8" height="17" fill="#e58f2c"/><rect x="21.500" y="30" width="7" height="7" fill="#d7a582"/><ellipse cx="25" cy="23.500" rx="9.300" ry="10.800" fill="#ecc3a6"/><path d="M15.500 22C13 11 19 7 26 7s11.500 4.500 9 14.500C33 16 30 14 25 14s-7.500 2.500-9.500 8z" fill="#3b2a23"/><circle cx="21.2" cy="23.5" r="1.2" fill="#2a1f1b"/><circle cx="28.8" cy="23.5" r="1.2" fill="#2a1f1b"/><ellipse cx="25" cy="30" rx="2.300" ry="1.700" fill="#8a3d34"/></svg></div>
<div class="t" style="left:261.6px;top:535.6999999999999px;font-size:10.5px;color:#30353c;line-height:14px;letter-spacing:-0.139px;">Joko</div>
<div class="t" style="left:261.6px;top:549.1999999999999px;font-size:9px;color:#7f848b;line-height:12px;letter-spacing:0.0px;">CP078 | Cashier</div>
<div class="t" style="left:362.8px;top:529.9px;font-size:10.5px;color:#30353c;line-height:14px;letter-spacing:0.436px;">202401050001</div>
<div class="t" style="left:475.3px;top:529.9px;font-size:10.5px;color:#30353c;line-height:14px;letter-spacing:0.147px;">5 Jan 2024</div>
<div class="t" style="left:586.8px;top:535.8px;font-size:10.5px;color:#30353c;line-height:14px;letter-spacing:-0.128px;">Sick Leave</div>
<div class="t" style="left:586.8px;top:549.0999999999999px;font-size:8.5px;color:#7f848b;line-height:12px;letter-spacing:0.0px;">SCL</div>
<div class="t" style="left:699.5px;top:529.9px;font-size:10.5px;color:#30353c;line-height:14px;letter-spacing:0.147px;">5 Jan 2024</div>
<div class="t" style="left:699.5px;top:543.3px;font-size:8.8px;color:#7f848b;line-height:12px;letter-spacing:-0.0px;">1 day</div>
<div class="t" style="left:699.5px;top:554.5px;font-size:8.8px;color:#4a5ccb;line-height:12px;letter-spacing:0.141px;"><a class="l">View attachment</a></div>
<div class="abs" style="left:853.600px;top:541.6px;width:51.2px;height:13.800px;border-radius:4px;background:#e4f4e7"></div>
<div class="t" style="left:857.6px;top:541.3px;font-size:10.5px;color:#5fa36f;line-height:14px;letter-spacing:-0.081px;">Approved</div>
<div class="abs sep" style="top:571.9px"></div>
<div class="t" style="left:208.4px;top:586.3px;font-size:10.5px;color:#6d727a;line-height:14px;letter-spacing:-0.163px;">Rows per page</div>
<div class="t" style="left:287.3px;top:586.3px;font-size:10.5px;color:#1f2329;line-height:14px;font-weight:700;letter-spacing:-0.039px;">10</div>
<svg class="i" style="left:309px;top:591.800px" width="6.400" height="3.600" viewBox="0 0 7 4"><path d="M0 0h7L3.500 4z" fill="#565b63"/></svg>
<div class="t" style="left:338.9px;top:586.3px;font-size:10.5px;color:#6d727a;line-height:14px;letter-spacing:0.157px;">Showing 1-10 of 100</div>
<div class="abs box" style="left:827.200px;top:583.200px;width:45.200px;height:20.200px;border-radius:4px"></div>
<div class="t" style="left:836.5px;top:586.4px;font-size:10.5px;color:#30353c;line-height:14px;">1</div>
<svg class="i" style="left:852.400px;top:591px" width="9" height="5.500" viewBox="0 0 9 5.500" fill="none" stroke="#62676f" stroke-width="1.200" stroke-linecap="round" stroke-linejoin="round"><path d="M.7 .7l3.800 3.800L8.300 .7"/></svg>
<div class="t" style="left:880.4px;top:586.4px;font-size:10.5px;color:#6d727a;line-height:14px;letter-spacing:0.128px;">of 10 page</div>
<svg class="i" style="left:948.500px;top:588.500px" width="7" height="10" viewBox="0 0 7 10" fill="none" stroke="#62676f" stroke-width="1.200" stroke-linecap="round" stroke-linejoin="round"><path d="M5.500 1L1.500 5l4 4"/></svg>
<svg class="i" style="left:975px;top:588.500px" width="7" height="10" viewBox="0 0 7 10" fill="none" stroke="#62676f" stroke-width="1.200" stroke-linecap="round" stroke-linejoin="round"><path d="M1.500 1l4 4-4 4"/></svg>
<div class="abs" style="left:963.700px;top:671.400px;width:28.400px;height:28.400px;border-radius:50%;background:#7a5de8;box-shadow:0 1px 3px rgba(90,70,200,.35)"></div>
<div class="t" style="left:973.6px;top:676.8px;font-size:16px;color:#ffffff;line-height:18px;font-weight:700;">?</div>
</body></html>
